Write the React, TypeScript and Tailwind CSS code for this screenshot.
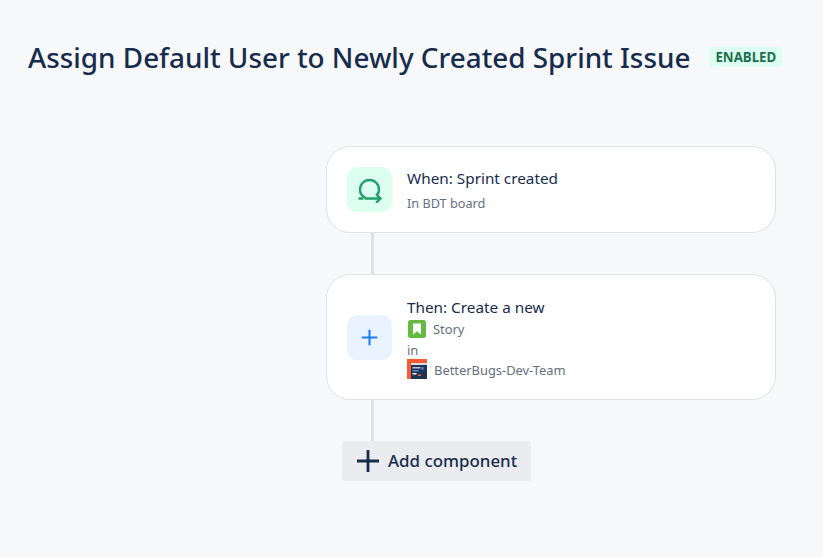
const font = { fontFamily: '"Noto Sans", sans-serif' };

function RuleIcon() {
    return (
        <svg width="26" height="26" viewBox="0 0 26 26" fill="none" stroke="#22a06b" strokeWidth="2.4">
            <path d="M8.5 20.8C5 19.2 3 16.2 3 12.5 3 7.2 7.2 3 12.5 3S22 7.2 22 12.5c0 2.4-.8 4.4-2.2 6" />
            <path d="M1.5 21.5h5M8 21.5h15M19 17l4.5 4.5L19 25.8" />
        </svg>
    );
}

function PlusIcon({ size, color, weight }: { size: number; color: string; weight: number }) {
    return (
        <svg width={size} height={size} viewBox="0 0 24 24" fill="none" stroke={color} strokeWidth={weight}>
            <path d="M12 1v22M1 12h22" />
        </svg>
    );
}

function StoryIcon() {
    return (
        <svg width="18" height="18" viewBox="0 0 18 18" className="block">
            <rect width="18" height="18" rx="2.5" fill="#65ba43" />
            <path d="M5 3.5h8v11L9 11.2 5 14.5z" fill="#fff" />
        </svg>
    );
}

function ProjectIcon() {
    return (
        <svg width="20" height="20" viewBox="0 0 20 20" className="block">
            <rect width="20" height="20" fill="#fc5a32" />
            <rect x="4" y="4" width="16" height="16" fill="#1f3352" />
            <rect x="4" y="4" width="16" height="2" fill="#d8dde6" />
            <rect x="5.5" y="8" width="8" height="1.5" fill="#b8c4d6" />
            <rect x="14.5" y="8" width="2" height="3" fill="#3d8fd8" />
            <rect x="5.5" y="11" width="6" height="1.5" fill="#3d8fd8" />
            <rect x="5.5" y="14" width="4" height="1.5" fill="#f4f5f7" />
            <rect x="11" y="15.5" width="3" height="1.5" fill="#fc5a32" />
        </svg>
    );
}

export default function App() {
    return (
        <div style={font} className="h-[557px] w-[823px] overflow-hidden bg-[#f7f8f9] text-[#172b4d]">
            {/* Header */}
            <div className="flex items-center pl-[28px] pt-[38px]">
                <h1 className="text-[27.85px] leading-[38px] font-medium whitespace-nowrap">Assign Default User to Newly Created Sprint Issue</h1>
                <span className="ml-[19px] rounded-[4px] bg-[#dcfff1] px-[6px] py-[1px] text-[13.3px] leading-[18px] font-bold text-[#216e4e]">ENABLED</span>
            </div>

            {/* Flow */}
            <div className="ml-[326px] mt-[70px] w-[450px]">
                <div className="flex h-[87px] items-center rounded-[24px] border border-[#dfe1e6] bg-white pl-[20px]">
                    <div className="flex h-[45px] w-[45px] items-center justify-center rounded-[10px] bg-[#dcfff1]">
                        <RuleIcon />
                    </div>
                    <div className="mb-[2px] ml-[15px]">
                        <p className="text-[15.3px] leading-[22px]">When: Sprint created</p>
                        <p className="mt-[6px] text-[12.7px] leading-[16px] text-[#666f7f]">In BDT board</p>
                    </div>
                </div>

                <div className="ml-[45px] h-[41px] w-[3px] bg-[#dfe1e6]" />

                <div className="flex h-[126px] items-center rounded-[24px] border border-[#dfe1e6] bg-white pl-[20px]">
                    <div className="flex h-[45px] w-[45px] items-center justify-center rounded-[10px] bg-[#e9f2ff]">
                        <PlusIcon size={17} color="#1d7afc" weight={2.9} />
                    </div>
                    <div className="ml-[15px] pt-[3px]">
                        <p className="text-[15.3px] leading-[22px]">Then: Create a new</p>
                        <div className="mt-[2px] flex h-[20px] items-center text-[12.9px] text-[#666f7f]">
                            <span className="mb-[2px] ml-[1px]"><StoryIcon /></span>
                            <span className="ml-[7px]">Story</span>
                        </div>
                        <p className="text-[12.9px] leading-[21px] text-[#666f7f]">in</p>
                        <div className="flex h-[20px] items-center text-[12.9px] text-[#666f7f]">
                            <span className="mb-[4px]"><ProjectIcon /></span>
                            <span className="ml-[7px]">BetterBugs-Dev-Team</span>
                        </div>
                    </div>
                </div>

                <div className="ml-[45px] h-[41px] w-[3px] bg-[#dfe1e6]" />

                <button className="ml-[16px] flex h-[40px] w-[189px] items-center rounded-[3px] bg-[#ebecf0] pl-[14px] text-[16.9px] font-medium">
                    <PlusIcon size={24} color="#172b4d" weight={2.8} />
                    <span className="ml-[8px]">Add component</span>
                </button>
            </div>
        </div>
    );
}
